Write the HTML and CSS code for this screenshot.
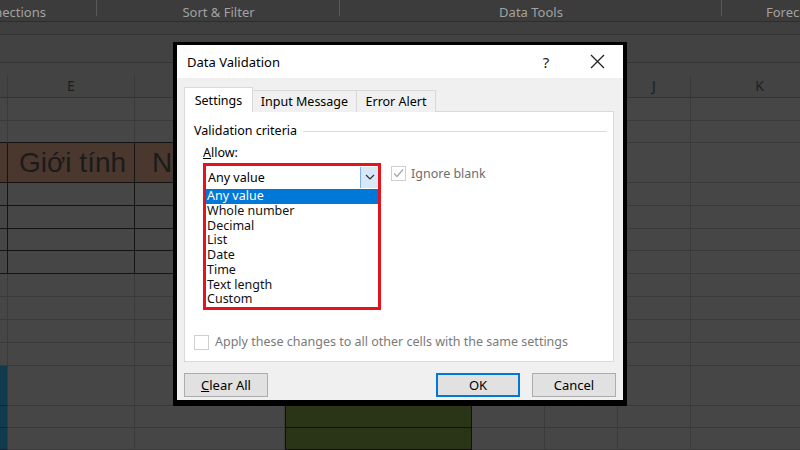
FILE: index.html
```html
<!DOCTYPE html>
<html lang="vi">
<head>
    <meta charset="UTF-8">
    <title>Data Validation</title>
    <link rel="stylesheet" href="styles.css">
</head>
<body>

    <!-- Excel behind the dialog (dimmed) -->
    <div class="ribbon">
        <div class="group first">Connections</div>
        <div class="group g-sort">Sort &amp; Filter</div>
        <div class="group g-tools">Data Tools</div>
        <div class="group g-fore">Forecast</div>
    </div>
    <div class="band"></div>
    <div class="formula"></div>

    <div class="cols">
        <div class="h"></div><div class="h">E</div><div class="h">F</div><div class="h">G</div>
        <div class="h">H</div><div class="h">I</div><div class="h">J</div><div class="h">K</div>
    </div>

    <div class="sheet">
        <div class="c"></div><div class="c"></div><div class="c"></div><div class="c"></div><div class="c"></div><div class="c"></div><div class="c"></div><div class="c"></div>
        <div class="c bb"></div><div class="c bb"></div><div class="c bb"></div><div class="c"></div><div class="c"></div><div class="c"></div><div class="c"></div><div class="c"></div>
        <div class="c tb brown"></div><div class="c tb brown head-e">Giới tính</div><div class="c tb brown head-f">Năm sinh</div><div class="c"></div><div class="c"></div><div class="c"></div><div class="c"></div><div class="c"></div>
        <div class="c tb"></div><div class="c tb"></div><div class="c tb"></div><div class="c"></div><div class="c"></div><div class="c"></div><div class="c"></div><div class="c"></div>
        <div class="c tb"></div><div class="c tb"></div><div class="c tb"></div><div class="c"></div><div class="c"></div><div class="c"></div><div class="c"></div><div class="c"></div>
        <div class="c tb"></div><div class="c tb"></div><div class="c tb"></div><div class="c"></div><div class="c"></div><div class="c"></div><div class="c"></div><div class="c"></div>
        <div class="c tb"></div><div class="c tb"></div><div class="c tb"></div><div class="c"></div><div class="c"></div><div class="c"></div><div class="c"></div><div class="c"></div>
        <div class="c"></div><div class="c"></div><div class="c"></div><div class="c"></div><div class="c"></div><div class="c"></div><div class="c"></div><div class="c"></div>
        <div class="c"></div><div class="c"></div><div class="c"></div><div class="c"></div><div class="c"></div><div class="c"></div><div class="c"></div><div class="c"></div>
        <div class="c"></div><div class="c"></div><div class="c"></div><div class="c"></div><div class="c"></div><div class="c"></div><div class="c"></div><div class="c"></div>
        <div class="c"></div><div class="c"></div><div class="c"></div><div class="c"></div><div class="c"></div><div class="c"></div><div class="c"></div><div class="c"></div>
        <div class="c blue"></div><div class="c"></div><div class="c"></div><div class="c green"></div><div class="c"></div><div class="c"></div><div class="c"></div><div class="c"></div>
        <div class="c blue"></div><div class="c"></div><div class="c"></div><div class="c green"></div><div class="c"></div><div class="c"></div><div class="c"></div><div class="c"></div>
        <div class="c blue"></div><div class="c"></div><div class="c"></div><div class="c green"></div><div class="c"></div><div class="c"></div><div class="c"></div><div class="c"></div>
    </div>

    <!-- Data Validation dialog -->
    <div class="dialog">
        <div class="titlebar">
            <span class="title">Data Validation</span>
            <span class="help">?</span>
            <span class="close">
                <svg width="15" height="15" viewBox="0 0 15 15"><path d="M1 1L14 14M14 1L1 14" stroke="#222" stroke-width="1.3" fill="none"/></svg>
            </span>
        </div>

        <div class="dlg-body">
            <div class="tabs">
                <div class="tab active">Settings</div>
                <div class="tab t-input">Input Message</div>
                <div class="tab t-error">Error Alert</div>
            </div>

            <div class="panel">
                <div class="legend"><span>Validation criteria</span><span class="rule"></span></div>
                <div class="allow"><span class="key">Allow:</span></div>

                <div class="allow-row">
                    <div class="combo">
                        <div class="select">
                            <span class="value">Any value</span>
                            <span class="drop">
                                <svg width="10" height="6" viewBox="0 0 10 6"><path d="M1 1L5 5L9 1" stroke="#333" stroke-width="1.2" fill="none"/></svg>
                            </span>
                        </div>
                        <ul class="list">
                            <li class="sel">Any value</li>
                            <li>Whole number</li>
                            <li>Decimal</li>
                            <li>List</li>
                            <li>Date</li>
                            <li>Time</li>
                            <li>Text length</li>
                            <li>Custom</li>
                        </ul>
                    </div>
                    <div class="ignore">
                        <span class="box">
                            <svg width="13" height="13" viewBox="0 0 13 13"><path d="M2 6.5L5 9.5L11 2.5" stroke="#a8a8a8" stroke-width="1.3" fill="none"/></svg>
                        </span>
                        <span>Ignore blank</span>
                    </div>
                </div>

                <div class="apply">
                    <span class="box"></span>
                    <span>Apply these changes to all other cells with the same settings</span>
                </div>
            </div>

            <div class="buttons">
                <button class="btn"><span class="key">Clear All</span></button>
                <button class="btn ok">OK</button>
                <button class="btn">Cancel</button>
            </div>
        </div>
    </div>

</body>
</html>
```

FILE: styles.css
```css
body {
    margin: 0;
    width: 800px;
    height: 450px;
    overflow: hidden;
    position: relative;
    background-color: #454545;
    font-family: "Noto Sans", "Open Sans", sans-serif;
}

/* ---- spreadsheet background ---- */
.ribbon {
    height: 22px;
    display: flex;
    background-color: #3c3c3c;
    border-bottom: 1px solid #2e2e2e;
    box-sizing: border-box;
    overflow: hidden;
}

.group {
    flex: none;
    font-size: 13px;
    line-height: 24px;
    color: #a2a2a2;
    text-align: center;
    background: linear-gradient(#585858, #585858) right top / 1px 16px no-repeat;
}

.group.first { width: 178px; margin-left: -81px; }
.g-sort { width: 243px; }
.g-tools { width: 382px; }
.g-fore { width: 200px; text-align: left; padding-left: 44px; background: none; }

.band {
    height: 13px;
    background-color: #3f3f3f;
    border-bottom: 1px solid #353535;
    box-sizing: border-box;
}

.formula {
    height: 28px;
    background-color: #424242;
    border-bottom: 1px solid #333;
    box-sizing: border-box;
}

.cols, .sheet {
    display: grid;
    grid-template-columns: 8px 127px 150px 187px 73px 73px 73px 138px;
}

.cols {
    height: 35px;
    background-color: #434343;
    border-bottom: 1px solid #333;
    box-sizing: border-box;
}

.h {
    margin-top: 12px;
    font-size: 14px;
    line-height: 22px;
    text-align: center;
    color: #1e1e1e;
    border-right: 1px solid #3a3a3a;
    overflow: hidden;
}

.sheet {
    grid-template-rows: 23px 22px 40px 23px 23px 22px 23px 23px 23px 23px 23px 40px 22px 22px;
}

.c {
    background-color: #464646;
    border-right: 1px solid #3a3a3a;
    border-bottom: 1px solid #3a3a3a;
    box-sizing: border-box;
    white-space: nowrap;
}

.bb { border-bottom-color: #141414; }
.tb { border-right-color: #141414; border-bottom-color: #141414; }

.brown { background-color: #4a382e; }

.head-e, .head-f {
    font-family: "Liberation Sans", Arial, sans-serif;
    font-size: 28px;
    line-height: 40px;
    color: #1b1b1b;
}

.head-e { padding-left: 11px; }
.head-f { padding-left: 17px; }

.blue {
    background-color: #103a4d;
    border-bottom-color: #14242c;
}

.green {
    background-color: #2a3518;
    border-right-color: #101010;
    border-bottom-color: #101010;
    border-left: 1px solid #101010;
}

/* ---- dialog ---- */
.dialog {
    position: absolute;
    left: 173px;
    top: 42px;
    width: 446px;
    height: 355px;
    border: 4px solid #000;
    border-top-width: 3px;
    border-bottom-width: 6px;
    background-color: #f0f0f0;
    font-size: 12.5px;
    color: #000;
}

/* access-key underline on the first letter */
.key { display: inline-block; }
.key::first-letter { text-decoration: underline; }

.titlebar {
    height: 33px;
    background-color: #fff;
    display: flex;
    align-items: center;
    padding: 0 3px 0 10px;
}

.title { flex: 1; font-size: 13px; }

.help {
    width: 20px;
    margin-right: 18px;
    text-align: center;
    font-size: 15px;
    color: #222;
}

.close {
    width: 46px;
    display: flex;
    justify-content: center;
    align-items: center;
}

.dlg-body {
    padding: 9px 7px 0 7px;
}

.tabs {
    display: flex;
    align-items: flex-end;
    height: 25px;
    position: relative;
    z-index: 1;
}

.tab {
    height: 22px;
    line-height: 21px;
    text-align: center;
    box-sizing: border-box;
    border: 1px solid #d9d9d9;
    border-bottom: none;
    border-left: none;
    background-color: #f0f0f0;
}

.tab.active {
    width: 69px;
    height: 25px;
    line-height: 25px;
    background-color: #fff;
    border-left: 1px solid #d9d9d9;
}

.t-input { width: 104px; }
.t-error { width: 79px; }

.panel {
    height: 251px;
    margin: -1px 2px 0 0;
    background-color: #fff;
    border: 1px solid #d9d9d9;
    box-sizing: border-box;
    display: flex;
    flex-direction: column;
}

.legend {
    display: flex;
    align-items: center;
    margin: 10px 6px 0 9px;
    line-height: 18px;
}

.rule {
    flex: 1;
    margin-left: 6px;
    border-top: 1px solid #dcdcdc;
}

.allow {
    margin: 4px 0 0 18px;
    line-height: 18px;
}

.allow-row {
    display: flex;
    align-items: flex-start;
    margin: 1px 0 0 18px;
}

.combo {
    width: 172px;
    border: 3px solid #e3141d;
}

.select {
    height: 22px;
    display: flex;
    align-items: center;
    background-color: #fff;
}

.value {
    flex: 1;
    padding-left: 2px;
}

.drop {
    width: 18px;
    height: 21px;
    display: flex;
    align-items: center;
    justify-content: center;
    background-color: #d8e8f8;
    border-left: 1px solid #7db2e8;
    box-sizing: border-box;
}

.list {
    list-style: none;
    margin: 0;
    padding: 1px 0 0;
    background-color: #fff;
}

.list li {
    line-height: 14.75px;
    height: 14.75px;
    padding-left: 1px;
    color: #111;
}

.list li.sel {
    background-color: #0078d7;
    color: #fff;
}

.box {
    width: 15px;
    height: 15px;
    border: 1px solid #cfcfcf;
    box-sizing: border-box;
    background-color: #fff;
    display: inline-flex;
    align-items: center;
    justify-content: center;
    flex: none;
}

.ignore {
    display: flex;
    align-items: center;
    gap: 5px;
    margin: 3px 0 0 10px;
    line-height: 15px;
    color: #6e6e6e;
}

.apply {
    margin: auto 0 10px 9px;
    display: flex;
    align-items: center;
    gap: 6px;
    line-height: 18px;
    color: #7a7a7a;
}

.buttons {
    display: flex;
    margin-top: 11px;
}

.btn {
    width: 84px;
    height: 24px;
    padding: 0;
    font-family: inherit;
    font-size: 13px;
    color: #000;
    background-color: #e1e1e1;
    border: 1px solid #adadad;
}

.btn.ok {
    margin-left: auto;
    margin-right: 12px;
    border: 2px solid #0078d7;
}
```
